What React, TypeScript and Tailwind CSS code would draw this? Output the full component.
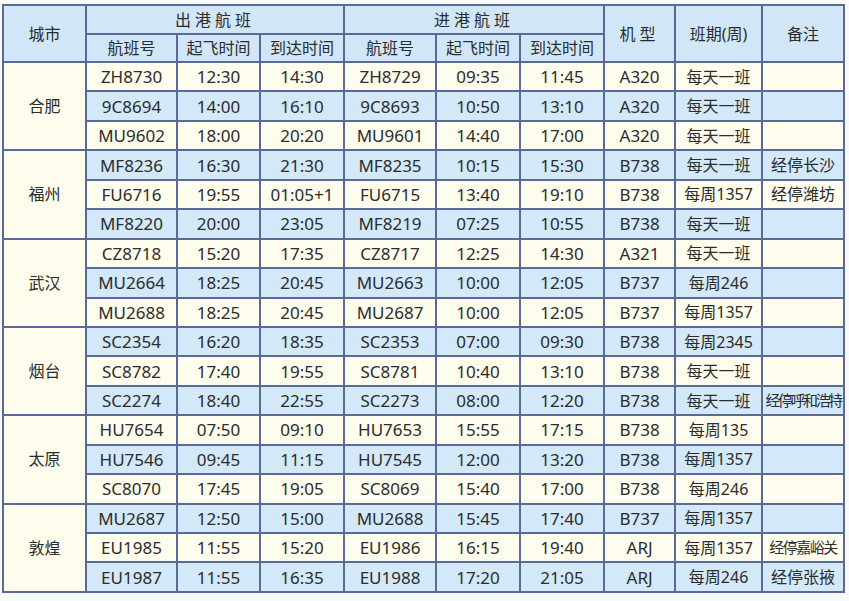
import React from "react";

type Row = [string, string, string, string, string, string, string, string, string];

const groups: { city: string; rows: Row[] }[] = [
  {
    city: "合肥",
    rows: [
      ["ZH8730", "12:30", "14:30", "ZH8729", "09:35", "11:45", "A320", "每天一班", ""],
      ["9C8694", "14:00", "16:10", "9C8693", "10:50", "13:10", "A320", "每天一班", ""],
      ["MU9602", "18:00", "20:20", "MU9601", "14:40", "17:00", "A320", "每天一班", ""],
    ],
  },
  {
    city: "福州",
    rows: [
      ["MF8236", "16:30", "21:30", "MF8235", "10:15", "15:30", "B738", "每天一班", "经停长沙"],
      ["FU6716", "19:55", "01:05+1", "FU6715", "13:40", "19:10", "B738", "每周1357", "经停潍坊"],
      ["MF8220", "20:00", "23:05", "MF8219", "07:25", "10:55", "B738", "每天一班", ""],
    ],
  },
  {
    city: "武汉",
    rows: [
      ["CZ8718", "15:20", "17:35", "CZ8717", "12:25", "14:30", "A321", "每天一班", ""],
      ["MU2664", "18:25", "20:45", "MU2663", "10:00", "12:05", "B737", "每周246", ""],
      ["MU2688", "18:25", "20:45", "MU2687", "10:00", "12:05", "B737", "每周1357", ""],
    ],
  },
  {
    city: "烟台",
    rows: [
      ["SC2354", "16:20", "18:35", "SC2353", "07:00", "09:30", "B738", "每周2345", ""],
      ["SC8782", "17:40", "19:55", "SC8781", "10:40", "13:10", "B738", "每天一班", ""],
      ["SC2274", "18:40", "22:55", "SC2273", "08:00", "12:20", "B738", "每天一班", "经停呼和浩特"],
    ],
  },
  {
    city: "太原",
    rows: [
      ["HU7654", "07:50", "09:10", "HU7653", "15:55", "17:15", "B738", "每周135", ""],
      ["HU7546", "09:45", "11:15", "HU7545", "12:00", "13:20", "B738", "每周1357", ""],
      ["SC8070", "17:45", "19:05", "SC8069", "15:40", "17:00", "B738", "每周246", ""],
    ],
  },
  {
    city: "敦煌",
    rows: [
      ["MU2687", "12:50", "15:00", "MU2688", "15:45", "17:40", "B737", "每周1357", ""],
      ["EU1985", "11:55", "15:20", "EU1986", "16:15", "19:40", "ARJ", "每周1357", "经停嘉峪关"],
      ["EU1987", "11:55", "16:35", "EU1988", "17:20", "21:05", "ARJ", "每周246", "经停张掖"],
    ],
  },
];

const widths = [83, 91, 83, 84, 92, 84, 84, 71, 87, 82];

function noteClass(t: string) {
  if (t.length >= 6) return "text-[15px] tracking-[-2.5px]";
  if (t.length === 5) return "text-[15px] tracking-[-1.5px]";
  return "text-[16px]";
}

export default function App() {
  let idx = 0;
  return (
    <div
      className="w-[849px] h-[601px] bg-[#f8fafc] pt-[4px] pl-[2px] text-[#2c2c2c]"
      style={{ fontFamily: '"Noto Sans", "Noto Sans CJK SC", sans-serif' }}
    >
      <table className="border-collapse table-fixed w-[841px] border-2 border-[#5a6a98]">
        <colgroup>
          {widths.map((w, i) => (
            <col key={i} style={{ width: w }} />
          ))}
        </colgroup>
        <thead>
          <tr className="h-[29px] bg-[#d1e7f7]">
            <th rowSpan={2} className="border-2 border-[#5a6a98] font-normal text-[16px] text-center">城市</th>
            <th colSpan={3} className="border-2 border-[#5a6a98] font-normal text-[16px] tracking-[4px] text-center">出港航班</th>
            <th colSpan={3} className="border-2 border-[#5a6a98] font-normal text-[16px] tracking-[4px] text-center">进港航班</th>
            <th rowSpan={2} className="border-2 border-[#5a6a98] font-normal text-[16px] tracking-[4px] text-center">机型</th>
            <th rowSpan={2} className="border-2 border-[#5a6a98] font-normal text-[16px] text-center">班期(周)</th>
            <th rowSpan={2} className="border-2 border-[#5a6a98] font-normal text-[16px] text-center">备注</th>
          </tr>
          <tr className="h-[28px] bg-[#d1e7f7]">
            {["航班号", "起飞时间", "到达时间", "航班号", "起飞时间", "到达时间"].map((t, i) => (
              <th key={i} className="border-2 border-[#5a6a98] font-normal text-[16px] text-center">
                {t}
              </th>
            ))}
          </tr>
        </thead>
        <tbody>
          {groups.map((g) =>
            g.rows.map((r, ri) => {
              const even = idx % 2 === 0;
              idx++;
              return (
                <tr key={g.city + ri} className={`h-[29.45px] ${even ? "bg-[#fefcec]" : "bg-[#d3e8f8]"}`}>
                  {ri === 0 && (
                    <td rowSpan={3} className="border-2 border-[#5a6a98] bg-[#fefcec] text-center text-[16px]">
                      {g.city}
                    </td>
                  )}
                  {r.map((c, ci) => (
                    <td
                      key={ci}
                      className={`border-2 border-[#5a6a98] text-center leading-none p-0 whitespace-nowrap overflow-hidden ${
                        ci === 8 ? noteClass(c) : ci === 7 ? "text-[16px]" : "text-[17px]"
                      }`}
                    >
                      {c}
                    </td>
                  ))}
                </tr>
              );
            })
          )}
        </tbody>
      </table>
    </div>
  );
}
